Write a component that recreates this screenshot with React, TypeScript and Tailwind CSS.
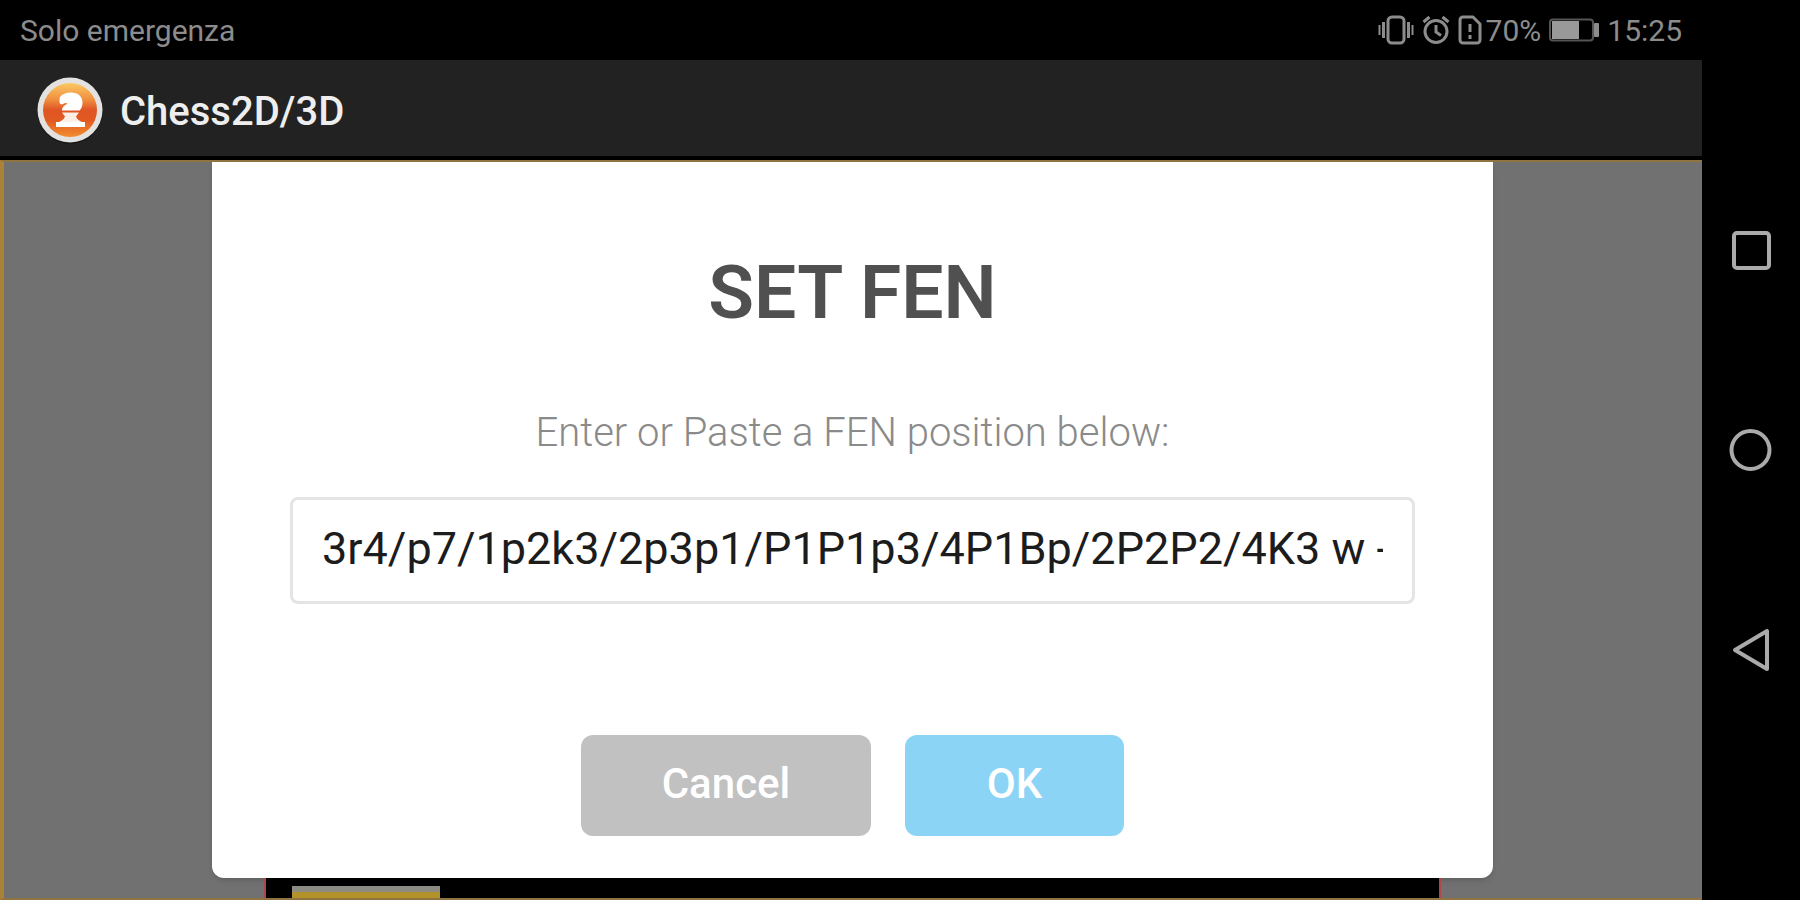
import { useState } from 'react';

const START_FEN = '3r4/p7/1p2k3/2p3p1/P1P1p3/4P1Bp/2P2P2/4K3 w -';

function AppLogo() {
  return (
    <svg viewBox="0 0 68 68" className="size-[68px] shrink-0" aria-hidden="true">
      <defs>
        <linearGradient id="logoFill" x1="0" y1="0" x2="0" y2="1">
          <stop offset="0" stopColor="#fbc964" />
          <stop offset="0.3" stopColor="#f09040" />
          <stop offset="0.5" stopColor="#df5524" />
          <stop offset="0.7" stopColor="#e25a22" />
          <stop offset="1" stopColor="#f28e30" />
        </linearGradient>
      </defs>
      <circle cx="34" cy="35.500" r="32.500" fill="#111" opacity="0.6" />
      <circle cx="34" cy="34" r="32.5" fill="#e4e2e0" />
      <circle cx="34" cy="34" r="27" fill="url(#logoFill)" />
      <path
        d="M24 21c2-3 6-4.500 11-4.500 7 0 11.500 4 11.500 10 0 3.500-1 6-3 8H26c0-3 1.500-4.500 5.500-7-1.500-1-3-.5-4.500.5-1.500.8-3.500 0-3.500-2 0-1.500 0-3.500.5-5z"
        fill="#fff"
      />
      <path d="M26 36.500h17l-3 4c1 3 3.500 4.500 7 6H22c3.500-1.500 6-3 7-6z" fill="#fdeee6" />
      <path d="M20 46h29v5H20z" fill="#fff" />
    </svg>
  );
}

function VibrateIcon() {
  return (
    <svg viewBox="0 0 36 32" className="h-8 w-9" fill="none" stroke="#8c8c8c" strokeWidth="3" aria-hidden="true">
      <rect x="10" y="3" width="16" height="26" rx="4" />
      <path d="M5.500 8v16M30.500 8v16" />
      <path d="M1.500 11v10M34.500 11v10" strokeWidth="2" />
    </svg>
  );
}

function AlarmIcon() {
  return (
    <svg viewBox="0 0 28 32" className="h-8 w-7" fill="none" stroke="#8c8c8c" strokeWidth="3" aria-hidden="true">
      <circle cx="14" cy="17.500" r="11" />
      <path d="M14 11v7l5 3.500M1.500 8l6-5M26.500 8l-6-5" />
    </svg>
  );
}

function SimAlertIcon() {
  return (
    <svg viewBox="0 0 24 32" className="h-8 w-6" fill="none" stroke="#8c8c8c" strokeWidth="3" aria-hidden="true">
      <path d="M5 3h10l7 7v16a3 3 0 0 1-3 3H5a3 3 0 0 1-3-3V6a3 3 0 0 1 3-3z" strokeLinejoin="round" />
      <path d="M12 10v8M12 21v4" />
    </svg>
  );
}

function BatteryIcon() {
  return (
    <svg viewBox="0 0 50 24" className="h-6 w-[50px]" aria-hidden="true">
      <rect x="1" y="1.500" width="43" height="21" rx="3" fill="none" stroke="#555" strokeWidth="2" />
      <rect x="3" y="3" width="27" height="18" fill="#999" />
      <rect x="45" y="5" width="5" height="14" rx="1" fill="#8c8c8c" />
    </svg>
  );
}

function StatusBar() {
  return (
    <div className="flex h-[60px] shrink-0 items-center justify-between bg-black px-5 text-[30px] text-[#8c8c8c]">
      <span>Solo emergenza</span>
      <div className="flex items-center">
        <VibrateIcon />
        <span className="ml-2"><AlarmIcon /></span>
        <span className="ml-2"><SimAlertIcon /></span>
        <span className="ml-1">70%</span>
        <span className="ml-2"><BatteryIcon /></span>
        <span className="ml-2">15:25</span>
      </div>
    </div>
  );
}

function NavBar() {
  return (
    <nav className="flex w-[98px] shrink-0 flex-col items-center justify-center gap-40 bg-black">
      <button type="button" aria-label="Recent apps">
        <svg viewBox="0 0 40 40" className="size-10" fill="none" stroke="#aaa" strokeWidth="4">
          <rect x="3" y="3" width="35" height="35" rx="3" />
        </svg>
      </button>
      <button type="button" aria-label="Home">
        <svg viewBox="0 0 40 40" className="size-10 overflow-visible" fill="none" stroke="#aaa" strokeWidth="4">
          <circle cx="19.500" cy="20" r="19" />
        </svg>
      </button>
      <button type="button" aria-label="Back">
        <svg viewBox="0 0 40 40" className="size-10 overflow-visible" fill="none" stroke="#aaa" strokeWidth="4">
          <path d="M4 20 36 1v38z" strokeLinejoin="round" />
        </svg>
      </button>
    </nav>
  );
}

export default function App() {
  const [fen, setFen] = useState(START_FEN);

  return (
    <div className="flex min-h-screen bg-black font-['Roboto',sans-serif]">
      <div className="flex min-w-0 flex-1 flex-col">
        <StatusBar />

        <header className="flex h-[100px] shrink-0 items-center gap-4 border-b-4 border-black bg-[#222] pt-1 pl-9">
          <AppLogo />
          <h1 className="pt-1 text-[40px] font-medium text-[#eee]">Chess2D/3D</h1>
        </header>

        {/* Page behind the dialog */}
        <main className="flex flex-1 flex-col border-y-2 border-l-4 border-y-[#8f7340] border-l-[#a98237] bg-[#717171] pl-[208px] pr-[209px]">
          <form
            className="flex flex-1 flex-col items-center rounded-b-xl bg-white px-[78px] pt-[90px] pb-[42px] shadow-md"
            onSubmit={(e) => e.preventDefault()}
          >
            <h2 className="text-[75px] leading-[80px] font-semibold text-[#505050]">SET FEN</h2>
            <label htmlFor="fen" className="mt-[75px] text-[40px] leading-[52px] font-light text-[#8a8a8a]">
              Enter or Paste a FEN position below:
            </label>
            <input
              id="fen"
              type="text"
              value={fen}
              onChange={(e) => setFen(e.target.value)}
              className="mt-[38px] h-[107px] w-full rounded-lg border-3 border-[#e4e4e4] px-[29px] pb-1 text-[45px] text-[#1c1c1c] outline-none"
            />
            <div className="mt-auto flex gap-[34px]">
              <button type="button" className="h-[101px] w-[290px] rounded-xl bg-[#c1c1c1] pb-1 text-[42px] font-medium text-white">
                Cancel
              </button>
              <button type="submit" className="h-[101px] w-[219px] rounded-xl bg-[#8cd4f5] pb-1 text-[42px] font-medium text-white">
                OK
              </button>
            </div>
          </form>

          {/* Top edge of the board */}
          <div className="mx-13 flex h-5 items-end border-x-2 border-[#b0454b] bg-black pl-[26px]">
            <div className="h-3 w-[148px] border-t-6 border-[#8c8c84] bg-[#b3922a]" />
          </div>
        </main>
      </div>

      <NavBar />
    </div>
  );
}
